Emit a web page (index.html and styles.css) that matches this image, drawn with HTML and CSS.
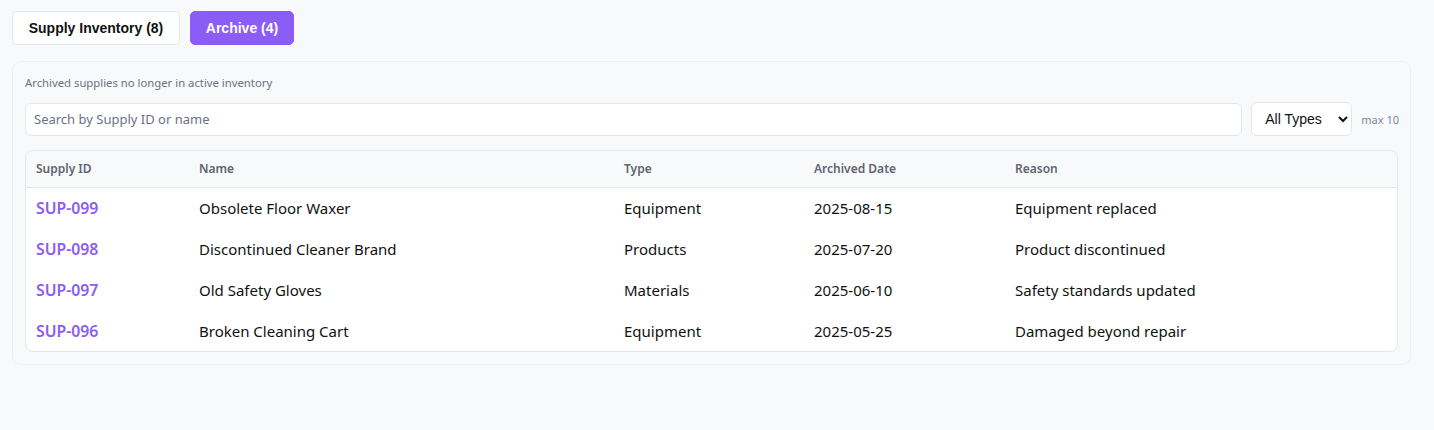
FILE: index.html
```html
<!DOCTYPE html>
<html>
<head>
<meta charset="utf-8">
<link rel="stylesheet" href="styles.css">
</head>
<body>
<div class="page">
  <div class="tabs">
    <button class="tab">Supply Inventory (8)</button>
    <button class="tab active">Archive (4)</button>
  </div>
  <div class="panel">
    <p class="desc">Archived supplies no longer in active inventory</p>
    <div class="filters">
      <input class="search" type="text" placeholder="Search by Supply ID or name">
      <select class="type-select">
        <option>All Types</option>
      </select>
      <span class="max">max 10</span>
    </div>
    <div class="table-wrap">
      <table>
        <colgroup>
          <col class="c1"><col class="c2"><col class="c3"><col class="c4"><col class="c5">
        </colgroup>
        <thead>
          <tr><th>Supply ID</th><th>Name</th><th>Type</th><th>Archived Date</th><th>Reason</th></tr>
        </thead>
        <tbody>
          <tr><td class="id">SUP-099</td><td>Obsolete Floor Waxer</td><td>Equipment</td><td>2025-08-15</td><td>Equipment replaced</td></tr>
          <tr><td class="id">SUP-098</td><td>Discontinued Cleaner Brand</td><td>Products</td><td>2025-07-20</td><td>Product discontinued</td></tr>
          <tr><td class="id">SUP-097</td><td>Old Safety Gloves</td><td>Materials</td><td>2025-06-10</td><td>Safety standards updated</td></tr>
          <tr><td class="id">SUP-096</td><td>Broken Cleaning Cart</td><td>Equipment</td><td>2025-05-25</td><td>Damaged beyond repair</td></tr>
        </tbody>
      </table>
    </div>
  </div>
</div>
</body>
</html>
```
FILE: styles.css
```css
* { box-sizing: border-box; }
html, body { margin: 0; padding: 0; background: #f8f9fb; }
body { font-family: "Noto Sans", "Open Sans", sans-serif; color: #111; }
.page { padding: 11px 23px 0 12px; }
.tabs { display: flex; gap: 10px; }
.tab {
  font-family: "Liberation Sans", Arial, sans-serif;
  font-weight: bold;
  font-size: 14px;
  height: 34px;
  width: 168px;
  padding: 0;
  border: 1px solid #e3e5ea;
  background: #fff;
  color: #111;
  border-radius: 5px;
}
.tab.active { background: #8b5cf6; border-color: #8b5cf6; color: #fff; width: 104px; }
.panel {
  margin-top: 16px;
  background: #f8f9fa;
  border: 1px solid #eeeff2;
  border-radius: 9px;
  padding: 12px 12px 12px 12px;
}
.desc { margin: 0; font-size: 11.3px; color: #6b7280; line-height: 18px; }
.filters { display: flex; align-items: center; gap: 9px; margin-top: 10px; }
.search {
  flex: 1;
  height: 33px;
  border: 1px solid #e5e7eb;
  border-radius: 6px;
  padding: 0 8px;
  font-family: inherit;
  font-size: 13px;
  background: #fff;
}
.search::placeholder { color: #6b7280; }
.type-select {
  width: 101px;
  height: 34px;
  border: 1px solid #e5e7eb;
  border-radius: 6px;
  background: #fff;
  font-family: "Liberation Sans", Arial, sans-serif;
  font-size: 14px;
  padding: 0 6px 0 9px;
  color: #111;
}
.max { font-size: 11px; color: #7b8aa0; margin-right: -1px; }
.table-wrap {
  margin-top: 14px;
  background: #fff;
  border: 1px solid #e5e7eb;
  border-radius: 8px;
  overflow: hidden;
}
table { width: 100%; border-collapse: collapse; table-layout: fixed; }
col.c1 { width: 163px; }
col.c2 { width: 425px; }
col.c3 { width: 190px; }
col.c4 { width: 201px; }
thead tr { background: #f8f9fb; border-bottom: 1px solid #e5e7eb; }
th {
  text-align: left;
  font-size: 12px;
  font-weight: 600;
  color: #5f6470;
  height: 36px;
  padding: 0 10px;
}
td {
  font-size: 15px;
  height: 41px;
  padding: 0 10px;
  color: #111;
}
td.id { color: #8b5cf6; font-weight: 600; font-size: 15.8px; }
```
